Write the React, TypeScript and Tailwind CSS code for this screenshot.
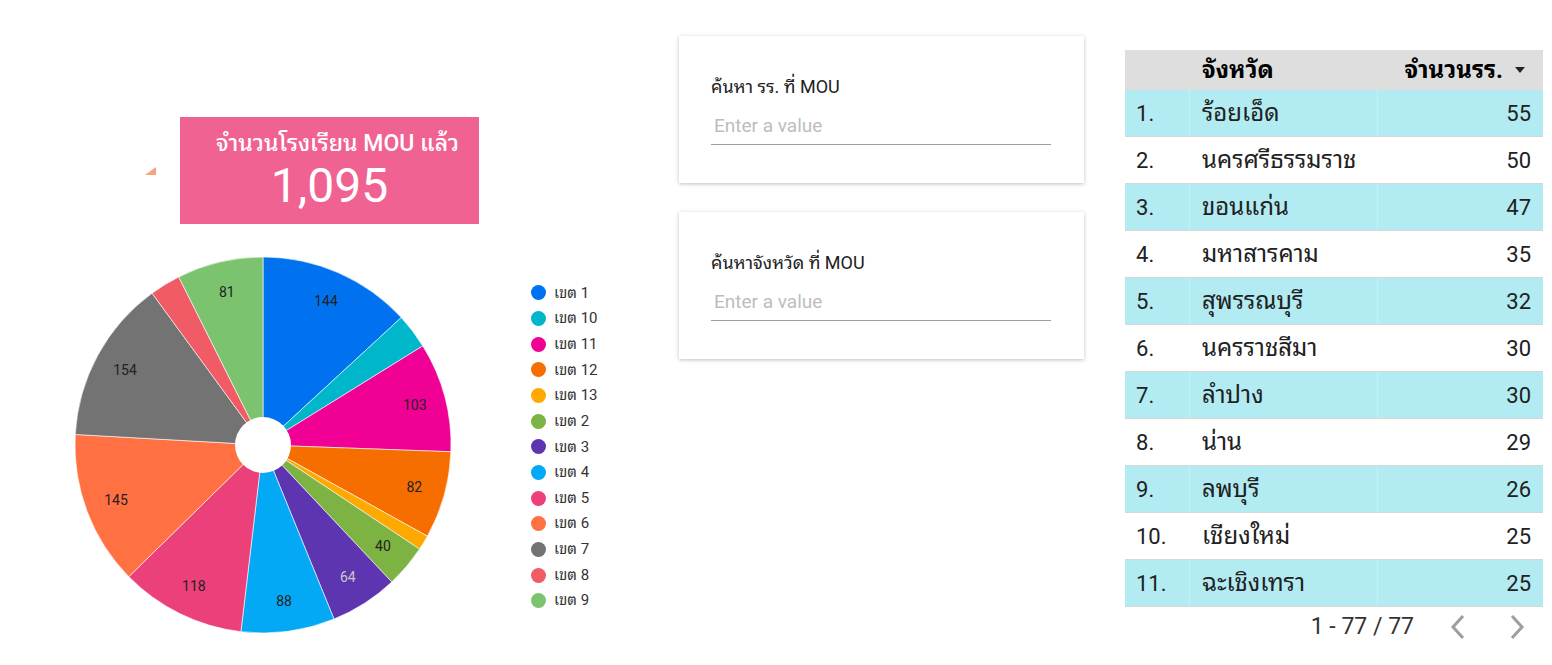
import React from "react";

const slices = [
  { name: "เขต 1", value: 144, color: "#0072f0" },
  { name: "เขต 10", value: 33, color: "#00b6cb" },
  { name: "เขต 11", value: 103, color: "#f10096" },
  { name: "เขต 12", value: 82, color: "#f66d00" },
  { name: "เขต 13", value: 14, color: "#ffa800" },
  { name: "เขต 2", value: 40, color: "#7cb342" },
  { name: "เขต 3", value: 64, color: "#5e35b1" },
  { name: "เขต 4", value: 88, color: "#03a9f4" },
  { name: "เขต 5", value: 118, color: "#ec407a" },
  { name: "เขต 6", value: 145, color: "#ff7043" },
  { name: "เขต 7", value: 154, color: "#737373" },
  { name: "เขต 8", value: 29, color: "#f15b66" },
  { name: "เขต 9", value: 81, color: "#7cc36f" },
];

const rows = [
  ["ร้อยเอ็ด", 55],
  ["นครศรีธรรมราช", 50],
  ["ขอนแก่น", 47],
  ["มหาสารคาม", 35],
  ["สุพรรณบุรี", 32],
  ["นครราชสีมา", 30],
  ["ลำปาง", 30],
  ["น่าน", 29],
  ["ลพบุรี", 26],
  ["เชียงใหม่", 25],
  ["ฉะเชิงเทรา", 25],
] as const;

const font = {
  fontFamily:
    'Roboto, "Noto Sans Thai Looped", Loma, Garuda, Norasi, "TlwgTypo", "Noto Sans Thai", Tahoma, sans-serif',
};

function Pie() {
  const total = slices.reduce((s, d) => s + d.value, 0);
  const cx = 190;
  const cy = 190;
  const r = 188;
  let acc = 0;
  const pt = (a: number, rad: number) => [cx + rad * Math.sin(a), cy - rad * Math.cos(a)];
  return (
    <svg width="380" height="380" viewBox="0 0 380 380" className="shrink-0">
      {slices.map((d) => {
        const a0 = (acc / total) * Math.PI * 2;
        acc += d.value;
        const a1 = (acc / total) * Math.PI * 2;
        const [x0, y0] = pt(a0, r);
        const [x1, y1] = pt(a1, r);
        const large = a1 - a0 > Math.PI ? 1 : 0;
        return (
          <path
            key={d.name}
            d={`M${cx},${cy} L${x0},${y0} A${r},${r} 0 ${large} 1 ${x1},${y1} Z`}
            fill={d.color}
            stroke="#ffffff"
            strokeWidth="0.6"
          />
        );
      })}
      <circle cx={cx} cy={cy} r="28" fill="#ffffff" />
      {(() => {
        let a = 0;
        return slices.map((d) => {
          const mid = ((a + d.value / 2) / total) * Math.PI * 2;
          a += d.value;
          if (d.value < 40) return null;
          const [x, y] = pt(mid, 157);
          return (
            <text
              key={d.name}
              x={x}
              y={y}
              textAnchor="middle"
              dominantBaseline="central"
              fontSize="14"
              fill={d.value === 64 ? "#c8c8c8" : "#222222"}
              style={font}
            >
              {d.value}
            </text>
          );
        });
      })()}
    </svg>
  );
}

function Filter({ label }: { label: string }) {
  return (
    <div className="h-[147px] w-[405px] bg-white px-8 pt-[40px] shadow-[0_1px_4px_rgba(0,0,0,0.25)]">
      <div className="text-[18px] leading-[22px] text-[#212121]">{label}</div>
      <div className="mt-[15px] w-[340px] border-b border-[#9e9e9e] pb-[5px] pl-[3px] text-[19px] leading-[26px] text-[#bdbdbd]">
        Enter a value
      </div>
    </div>
  );
}

export default function App() {
  return (
    <div className="flex h-[665px] w-[1552px] items-start overflow-hidden bg-white" style={font}>
      {/* left: scorecard + pie */}
      <div className="w-[679px] shrink-0 pt-[117px]">
        <div className="flex items-center">
          <svg width="11" height="8" viewBox="0 0 11 8" className="ml-[145px]">
            <polygon points="0,8 11,8 11,0" fill="#f4a37c" />
          </svg>
          <div className="ml-[24px] flex h-[107px] w-[299px] flex-col items-center bg-[#f06292] pl-[16px] pt-[12px] text-white">
            <div className="whitespace-nowrap text-[23px] font-medium leading-[30px]">จำนวนโรงเรียน MOU แล้ว</div>
            <div className="-ml-[16px] text-[48px] leading-[54px]">1,095</div>
          </div>
        </div>
        <div className="mt-[31px] flex items-start">
          <div className="ml-[73px]">
            <Pie />
          </div>
          <div className="ml-[78px] mt-[25px] flex flex-col">
            {slices.map((d) => (
              <div key={d.name} className="flex h-[25.67px] items-center gap-[8px]">
                <span className="h-[15px] w-[15px] rounded-full" style={{ backgroundColor: d.color }} />
                <span className="text-[15px] text-[#333333]">{d.name}</span>
              </div>
            ))}
          </div>
        </div>
      </div>

      {/* middle: filters */}
      <div className="flex w-[405px] shrink-0 flex-col gap-[29px] pt-[36px]">
        <Filter label="ค้นหา รร. ที่ MOU" />
        <Filter label="ค้นหาจังหวัด ที่ MOU" />
      </div>

      {/* right: table */}
      <div className="ml-[41px] w-[418px] shrink-0 pt-[50px]">
        <div className="flex h-[40px] items-center bg-[#dedede] text-[24px] font-bold text-black">
          <div className="w-[65px]" />
          <div className="w-[188px] pl-[12px]">จังหวัด</div>
          <div className="flex flex-1 items-center justify-end pr-[18px]">
            จำนวนรร.
            <svg width="10" height="6" viewBox="0 0 10 6" className="ml-[12px]">
              <polygon points="0,0 10,0 5,6" fill="#222" />
            </svg>
          </div>
        </div>
        {rows.map(([name, n], i) => (
          <div
            key={name}
            className={`flex h-[47px] items-center border-b border-[#d6d6d6] text-[22px] text-[#212121] ${
              i % 2 === 0 ? "bg-[#b2ebf2]" : "bg-white"
            }`}
          >
            <div className={`flex h-full w-[65px] items-center pl-[11px] ${i % 2 === 0 ? "border-r border-[#c4f1f6]" : ""}`}>
              {i + 1}.
            </div>
            <div
              className={`flex h-full w-[188px] items-center whitespace-nowrap pl-[12px] text-[24px] ${
                i % 2 === 0 ? "border-r border-[#c4f1f6]" : ""
              }`}
            >
              {name}
            </div>
            <div className="flex-1 pr-[12px] text-right">{n}</div>
          </div>
        ))}
        <div className="flex h-[40px] items-center justify-end text-[23px] text-[#333333]">
          <span>1 - 77 / 77</span>
          <svg width="16" height="26" viewBox="0 0 16 26" className="ml-[36px]">
            <polyline points="13,2 3,13 13,24" fill="none" stroke="#9e9e9e" strokeWidth="3" />
          </svg>
          <svg width="16" height="26" viewBox="0 0 16 26" className="ml-[43px] mr-[18px]">
            <polyline points="3,2 13,13 3,24" fill="none" stroke="#9e9e9e" strokeWidth="3" />
          </svg>
        </div>
      </div>
    </div>
  );
}
